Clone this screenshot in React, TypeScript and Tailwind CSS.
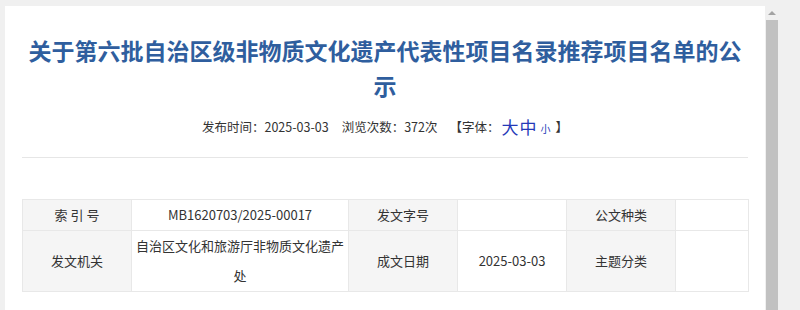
const font = { fontFamily: '"Microsoft YaHei", "Noto Sans CJK SC", sans-serif' };

interface ICell {
    text: string;
    label?: boolean;
    width: string;
}

const rows: ICell[][] = [
    [
        { text: "索 引 号", label: true, width: "w-[109px]" },
        { text: "MB1620703/2025-00017", width: "w-[217px]" },
        { text: "发文字号", label: true, width: "w-[109px]" },
        { text: "", width: "w-[109px]" },
        { text: "公文种类", label: true, width: "w-[109px]" },
        { text: "", width: "w-[73px]" },
    ],
    [
        { text: "发文机关", label: true, width: "w-[109px]" },
        { text: "自治区文化和旅游厅非物质文化遗产处", width: "w-[217px]" },
        { text: "成文日期", label: true, width: "w-[109px]" },
        { text: "2025-03-03", width: "w-[109px]" },
        { text: "主题分类", label: true, width: "w-[109px]" },
        { text: "", width: "w-[73px]" },
    ],
];

export default function App() {
    return (
        <div className="h-[310px] overflow-hidden bg-[#f0f0f0] flex pt-[6px] pl-[5px]" style={font}>
            <div className="w-[760px] h-[400px] bg-white px-[17px] pt-[27px] shrink-0">
                <h1 className="px-[3px] text-center text-[23px] leading-[35px] font-bold text-[#2f5e9e]">
                    关于第六批自治区级非物质文化遗产代表性项目名录推荐项目名单的公示
                </h1>

                <div className="mt-[12px] flex items-center justify-center h-[24px] text-[12.5px] text-[#333]">
                    <span>发布时间：2025-03-03</span>
                    <span className="ml-[13px]">浏览次数：372次</span>
                    <span className="ml-[12px]">【字体：</span>
                    <span className="text-[17px] text-[#2438b8] ml-[2px]">大</span>
                    <span className="text-[17px] text-[#2438b8] ml-[1px]">中</span>
                    <span className="text-[10px] text-[#2438b8] ml-[4px] mt-[3px]">小</span>
                    <span className="ml-[5px]">】</span>
                </div>

                <div className="mt-[18px] border-t border-[#e6e6e6]" />

                <table className="mt-[41px] w-[726px] table-fixed border-collapse text-[13px] text-[#333]">
                    <tbody>
                        {rows.map((row, i) => (
                            <tr key={i}>
                                {row.map((cell, j) => (
                                    <td
                                        key={j}
                                        className={`${cell.width} border border-[#e8e8e8] px-[2px] text-center leading-[30px] ${
                                            cell.label ? "bg-[#f5f5f5]" : "bg-white"
                                        }`}
                                    >
                                        {cell.text}
                                    </td>
                                ))}
                            </tr>
                        ))}
                    </tbody>
                </table>
            </div>

            <div className="w-[13px] flex flex-col shrink-0">
                <div className="h-[14px] flex items-center justify-center">
                    <div className="w-0 h-0 border-l-[4px] border-r-[4px] border-b-[4px] border-l-transparent border-r-transparent border-b-[#a3a3a3]" />
                </div>
                <div className="flex-1 ml-[1px] w-[12px] bg-[#c1c1c1]" />
            </div>
        </div>
    );
}
